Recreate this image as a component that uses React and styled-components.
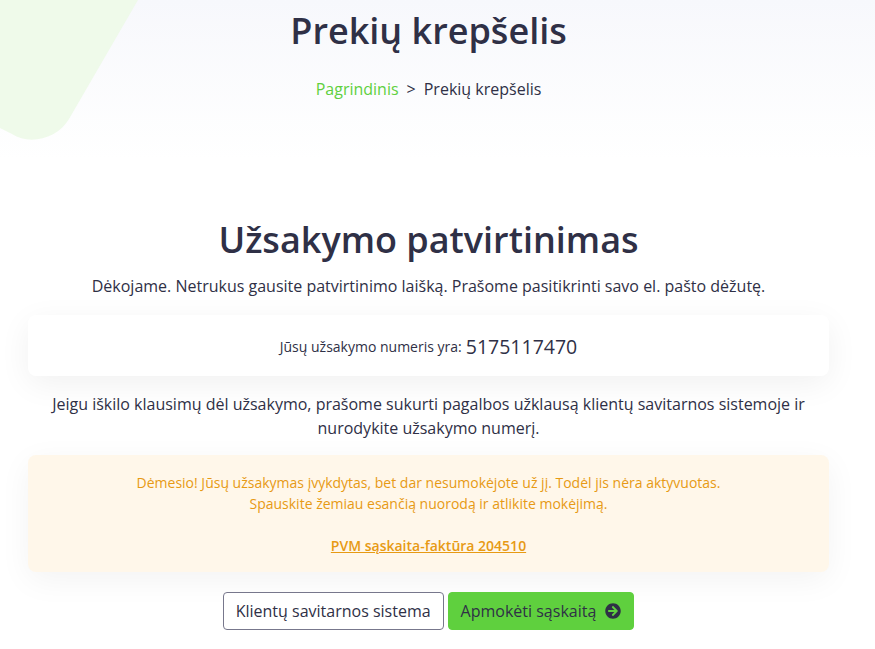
import React from 'react'
import styled, { createGlobalStyle } from 'styled-components'
import { FaArrowCircleRight } from 'react-icons/fa'

const GlobalStyle = createGlobalStyle`
  html, body { margin: 0; padding: 0; background: #fff; overflow: hidden; }
  body { font-family: "Open Sans", sans-serif; color: #2f3046; font-size: 16px; }
`
const Page = styled.div`
  width: 875px;
  height: 649px;
`
const Hero = styled.header`
  position: relative;
  height: 160px;
  padding-right: 18px;
  background: linear-gradient(180deg, #f7f8fc 0%, #ffffff 100%);
  text-align: center;
`
const HeroShape = styled.svg`
  position: absolute;
  top: 0;
  left: 0;
`
const HeroTitle = styled.h1`
  position: relative;
  margin: 0;
  padding-top: 6px;
  font-size: 36px;
  line-height: 49px;
  font-weight: 600;
`
const Breadcrumb = styled.nav`
  position: relative;
  margin-top: 22px;
  font-size: 16px;
  line-height: 24px;
`
const Crumb = styled.a`
  color: #5fd03e;
`
const Sep = styled.span`
  margin: 0 8px;
`
const Main = styled.main`
  width: 857px;
  box-sizing: border-box;
  padding: 55px 28px 0;
  text-align: center;
`
const Title = styled.h2`
  margin: 0;
  font-size: 36px;
  line-height: 49px;
  font-weight: 600;
`
const Lead = styled.p`
  margin: 10px 0 0;
  font-size: 16px;
  line-height: 24px;
`
const OrderCard = styled.div`
  margin-top: 17px;
  height: 61px;
  padding-top: 1px;
  box-sizing: border-box;
  display: flex;
  align-items: center;
  justify-content: center;
  gap: 4px;
  background: #fff;
  border-radius: 8px;
  box-shadow: 0 8px 32px rgba(0, 0, 0, 0.06);
  font-size: 14px;
`
const OrderNumber = styled.span`
  font-size: 19.5px;
`
const Help = styled.p`
  margin: 16px 0 0;
  font-size: 16px;
  line-height: 24px;
  padding: 0 10px;
`
const Notice = styled.div`
  margin-top: 15px;
  height: 117px;
  padding-top: 17px;
  box-sizing: border-box;
  background: #fff7ea;
  border-radius: 8px;
  box-shadow: 0 8px 32px rgba(0, 0, 0, 0.05);
  color: #e79a14;
  font-size: 14px;
  line-height: 21px;
`
const InvoiceLink = styled.a`
  color: #e79a14;
  font-weight: 600;
  text-decoration: underline;
`
const Actions = styled.div`
  margin-top: 20px;
  display: flex;
  justify-content: center;
  gap: 4px;
`
const Button = styled.a`
  display: inline-flex;
  align-items: center;
  gap: 9px;
  height: 38px;
  padding: 0 12px;
  box-sizing: border-box;
  border-radius: 4px;
  font-size: 16px;
  color: #2f3046;
  border: 1px solid ${props => (props.$primary ? '#5fd03e' : '#77778c')};
  background: ${props => (props.$primary ? '#5fd03e' : '#fff')};
`

const App = () => {
  return (
    <Page>
      <GlobalStyle />
      <Hero>
        <HeroShape width="140" height="150" viewBox="0 0 140 150">
          <path d="M0 0H138L69 119C58 138 30 146 12 134L0 128Z" fill="#effaea" />
        </HeroShape>
        <HeroTitle>Prekių krepšelis</HeroTitle>
        <Breadcrumb>
          <Crumb>Pagrindinis</Crumb>
          <Sep>&gt;</Sep>
          <span>Prekių krepšelis</span>
        </Breadcrumb>
      </Hero>
      <Main>
        <Title>Užsakymo patvirtinimas</Title>
        <Lead>Dėkojame. Netrukus gausite patvirtinimo laišką. Prašome pasitikrinti savo el. pašto dėžutę.</Lead>
        <OrderCard>
          Jūsų užsakymo numeris yra: <OrderNumber>5175117470</OrderNumber>
        </OrderCard>
        <Help>Jeigu iškilo klausimų dėl užsakymo, prašome sukurti pagalbos užklausą klientų savitarnos sistemoje ir nurodykite užsakymo numerį.</Help>
        <Notice>
          Dėmesio! Jūsų užsakymas įvykdytas, bet dar nesumokėjote už jį. Todėl jis nėra aktyvuotas.
          <br />
          Spauskite žemiau esančią nuorodą ir atlikite mokėjimą.
          <br />
          <br />
          <InvoiceLink>PVM sąskaita-faktūra 204510</InvoiceLink>
        </Notice>
        <Actions>
          <Button>Klientų savitarnos sistema</Button>
          <Button $primary>
            Apmokėti sąskaitą
            <FaArrowCircleRight size={16} />
          </Button>
        </Actions>
      </Main>
    </Page>
  )
}
export default App
